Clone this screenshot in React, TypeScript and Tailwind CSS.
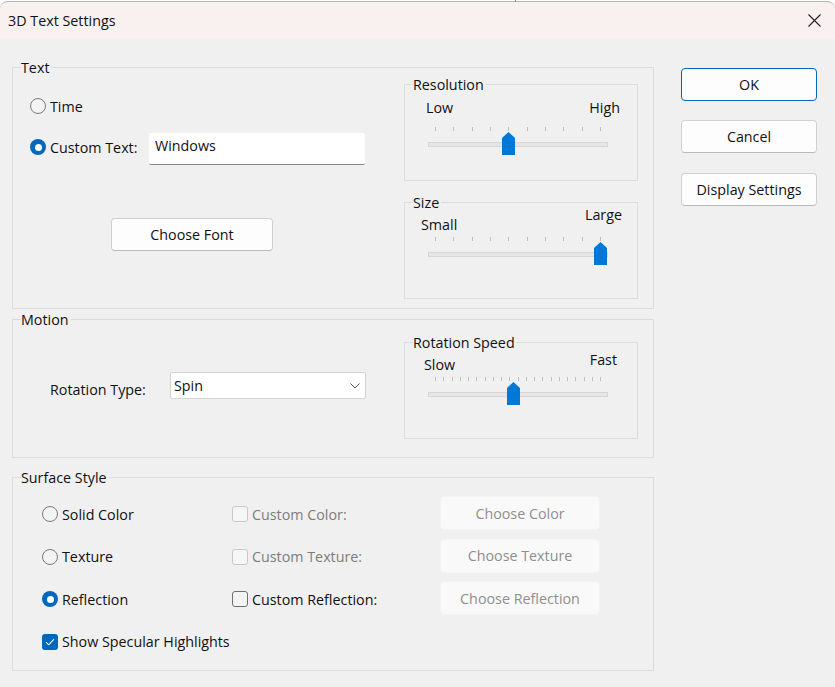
import React from 'react';

const Group: React.FC<{ title: string; className: string; children?: React.ReactNode }> = ({ title, className, children }) => (
  <div className={`relative border border-[#dcdcdc] ${className}`}>
    <span className="absolute top-[-10px] left-[8px] bg-[#f0f0f0] pr-[2px] leading-5 whitespace-nowrap">{title}</span>
    {children}
  </div>
);

const Radio: React.FC<{ checked?: boolean }> = ({ checked }) =>
  checked ? (
    <span className="w-4 h-4 shrink-0 rounded-full bg-[#0067c0] flex items-center justify-center">
      <span className="w-[7px] h-[7px] rounded-full bg-white" />
    </span>
  ) : (
    <span className="w-4 h-4 shrink-0 rounded-full border border-[#7a7a7a] bg-[#f3f3f3]" />
  );

const Check: React.FC<{ checked?: boolean; disabled?: boolean }> = ({ checked, disabled }) => {
  if (checked) {
    return (
      <span className="w-4 h-4 shrink-0 rounded-[3px] bg-[#0067c0] flex items-center justify-center">
        <svg width="10" height="8" viewBox="0 0 10 8" fill="none" stroke="white" strokeWidth="1.1">
          <path d="M1 4.2 L3.7 6.8 L9 1.2" />
        </svg>
      </span>
    );
  }
  return (
    <span className={`w-4 h-4 shrink-0 rounded-[3px] border ${disabled ? 'border-[#c8c8c8] bg-[#f6f6f6]' : 'border-[#6f6f6f] bg-[#f3f3f3]'}`} />
  );
};

const Slider: React.FC<{ ticks: number; thumb: number }> = ({ ticks, thumb }) => (
  <div className="relative ml-[23px] w-[180px] h-[28px]">
    <div className="flex justify-between px-[7px]">
      {Array.from({ length: ticks }).map((_, i) => (
        <span key={i} className="w-px h-1 bg-[#bdbdbd]" />
      ))}
    </div>
    <div className="mt-[11px] h-[5px] bg-[#e6e6e6] border border-[#d6d6d6]" />
    <svg className="absolute top-[5px]" style={{ left: thumb }} width="13" height="23" viewBox="0 0 13 23">
      <path d="M6.5 0 L13 6 V23 H0 V6 Z" fill="#0078d7" />
    </svg>
  </div>
);

const Button: React.FC<{ label: string; className?: string }> = ({ label, className = '' }) => (
  <button className={`h-[33px] bg-[#fdfdfd] border rounded-[4px] leading-5 ${className}`}>
    {label}
  </button>
);

const DisabledButton: React.FC<{ label: string }> = ({ label }) => (
  <button className="w-[160px] h-[34px] bg-[#f9f9f9] border border-[#f4f4f4] rounded-[4px] text-[#8f8f8f] leading-5 pt-px">
    {label}
  </button>
);

const surfaceRows = [
  { label: 'Solid Color', check: 'Custom Color:', button: 'Choose Color', disabled: true },
  { label: 'Texture', check: 'Custom Texture:', button: 'Choose Texture', disabled: true },
  { label: 'Reflection', check: 'Custom Reflection:', button: 'Choose Reflection', disabled: false, selected: true },
];

export default function App() {
  return (
    <div className="w-[835px] h-[687px] overflow-hidden bg-[#f0f0f0] text-[14.3px] leading-5 text-[#111] font-['Open_Sans','Noto_Sans',sans-serif]">
      {/* title bar */}
      <div className="relative h-[39px] bg-white pt-px">
        <span className="absolute left-[515px] top-0 w-px h-[2px] bg-[#8c8c8c]" />
        <div className="h-[38px] bg-[#f9f0f0] border-t border-[#b4b4b4] rounded-t-[8px] flex items-center justify-between pl-2 pr-[14px]">
          <span>3D Text Settings</span>
          <svg width="13" height="13" viewBox="0 0 13 13" fill="none" stroke="#222" strokeWidth="1.1">
            <path d="M0.5 0.5 L12.5 12.5 M12.5 0.5 L0.5 12.5" />
          </svg>
        </div>
      </div>

      <div className="flex pl-3 pt-[28px]">
        <div className="w-[642px]">
          <Group title="Text" className="h-[242px] flex justify-between">
            <div className="pl-[17px] pt-[28px]">
              <div className="flex items-center gap-1 h-5">
                <Radio />
                <span className="mt-px">Time</span>
              </div>
              <div className="flex items-start mt-[17px]">
                <div className="w-[119px] flex items-center gap-1 h-[28px]">
                  <Radio checked />
                  <span className="mt-px">Custom Text:</span>
                </div>
                <input
                  readOnly
                  value="Windows"
                  className="w-[216px] h-[32px] bg-white border-b border-[#8a8a8a] rounded-[2px] pl-[6px] pb-[7px] outline-none"
                />
              </div>
              <Button label="Choose Font" className="block w-[162px] ml-[81px] mt-[53px] border-[#d0d0d0] border-b-[#bababa]" />
            </div>
            <div className="w-[234px] mr-[15px] mt-[16px]">
              <Group title="Resolution" className="h-[97px] pt-[13px]">
                <div className="flex justify-between pl-[21px] pr-[17px]">
                  <span>Low</span>
                  <span>High</span>
                </div>
                <div className="mt-[9px]">
                  <Slider ticks={10} thumb={74} />
                </div>
              </Group>
              <Group title="Size" className="h-[97px] mt-[21px] pt-[2px]">
                <div className="flex justify-between items-start pl-[16px] pr-[15px]">
                  <span className="mt-[10px]">Small</span>
                  <span>Large</span>
                </div>
                <div className="mt-[2px]">
                  <Slider ticks={10} thumb={166} />
                </div>
              </Group>
            </div>
          </Group>

          <Group title="Motion" className="h-[139px] mt-[10px] flex justify-between">
            <div className="flex items-start pl-[37px] pt-[52px]">
              <span className="w-[120px] mt-[8px]">Rotation Type:</span>
              <div className="w-[196px] h-[27px] bg-white border border-[#d4d4d4] rounded-[2px] flex items-center justify-between pl-[3px] pr-[5px]">
                <span className="mt-px">Spin</span>
                <svg width="10" height="6" viewBox="0 0 10 6" fill="none" stroke="#555" strokeWidth="1">
                  <path d="M0.5 0.5 L5 5 L9.5 0.5" />
                </svg>
              </div>
            </div>
            <div className="w-[234px] mr-[15px] mt-[22px]">
              <Group title="Rotation Speed" className="h-[97px] pt-[7px]">
                <div className="flex justify-between items-start pl-[19px] pr-[20px]">
                  <span className="mt-[5px]">Slow</span>
                  <span>Fast</span>
                </div>
                <div className="mt-[2px]">
                  <Slider ticks={21} thumb={79} />
                </div>
              </Group>
            </div>
          </Group>

          <Group title="Surface Style" className="h-[194px] mt-[19px] pl-[29px] pt-[18px]">
            <div className="flex flex-col gap-y-[6.5px]">
              {surfaceRows.map((r) => (
                <div key={r.label} className="flex items-center h-[36px]">
                  <div className="w-[190px] flex items-center gap-1">
                    <Radio checked={r.selected} />
                    <span className="mt-px">{r.label}</span>
                  </div>
                  <div className="w-[208px] flex items-center gap-1">
                    <Check disabled={r.disabled} />
                    <span className={r.disabled ? 'mt-px text-[#7c7c7c]' : 'mt-px'}>{r.check}</span>
                  </div>
                  <div className="self-start">
                    <DisabledButton label={r.button} />
                  </div>
                </div>
              ))}
              <div className="flex items-center h-[36px]">
                <div className="flex items-center gap-1">
                  <Check checked />
                  <span>Show Specular Highlights</span>
                </div>
              </div>
            </div>
          </Group>
        </div>

        <div className="w-[136px] ml-[27px] mt-px flex flex-col">
          <Button label="OK" className="border-[#0067c0]" />
          <Button label="Cancel" className="mt-[19px] border-[#d0d0d0] border-b-[#bababa]" />
          <Button label="Display Settings" className="mt-[20px] border-[#d0d0d0] border-b-[#bababa]" />
        </div>
      </div>
    </div>
  );
}
